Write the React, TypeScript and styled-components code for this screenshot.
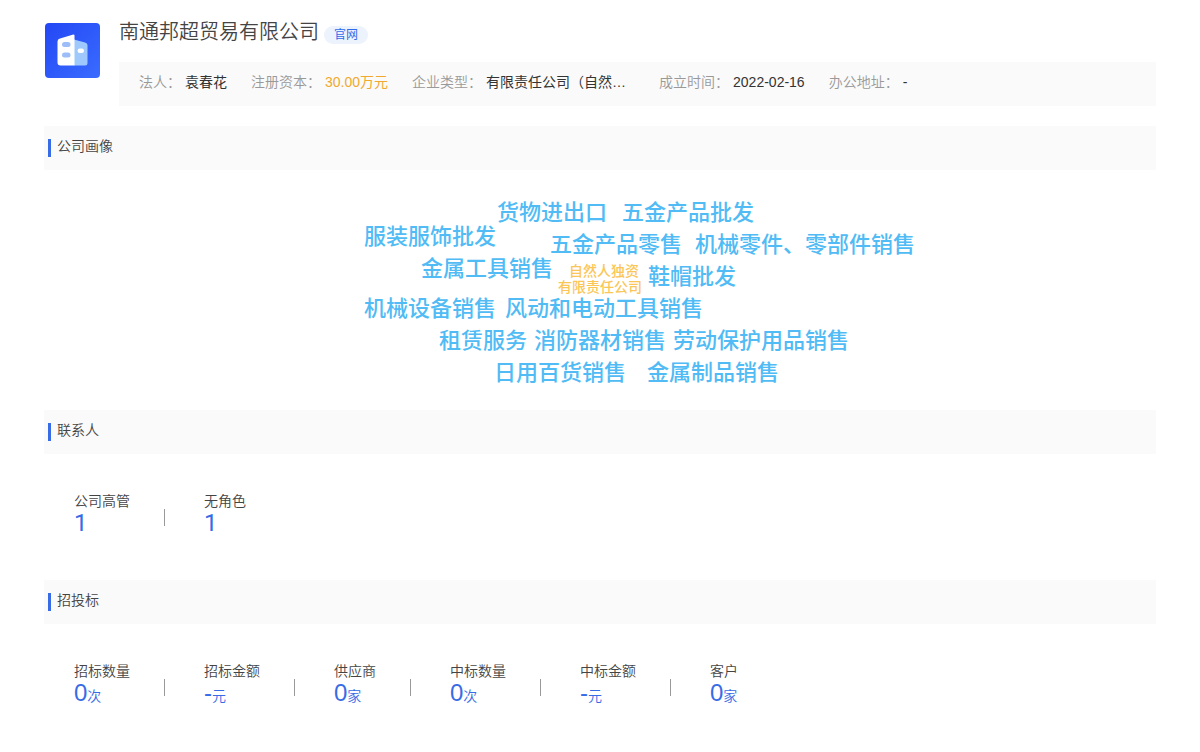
import React from "react";
import styled, { createGlobalStyle } from "styled-components";

const GlobalStyle = createGlobalStyle`
  body {
    margin: 0;
    background: #fff;
    color: #444;
    font-family: "Liberation Sans", "Noto Sans CJK SC", sans-serif;
    font-size: 14px;
    line-height: 20px;
  }
`;

const Page = styled.main`
  padding: 20px 44px;
`;

const Header = styled.header`
  display: flex;
  gap: 19px;
  margin-bottom: 20px;
`;

const Logo = styled.svg`
  flex: none;
  width: 56px;
  height: 56px;
  margin-top: 2px;
`;

const HeaderBody = styled.div`
  flex: 1;
  min-width: 0;
`;

const TitleRow = styled.div`
  display: flex;
  align-items: flex-start;
  gap: 5px;
  height: 42px;
`;

const CompanyName = styled.h1`
  margin: 0;
  font-size: 20px;
  line-height: 24px;
  font-weight: 350;
`;

const SiteLink = styled.a`
  margin-top: 6px;
  padding: 0 10px;
  border-radius: 9px;
  background: #ecf3fd;
  color: #2f6bea;
  font-size: 12px;
  line-height: 18px;
  text-decoration: none;
`;

const InfoBar = styled.dl`
  display: flex;
  gap: 24px;
  margin: 0;
  padding: 10px 20px 14px;
  background: #fafafa;
`;

const InfoItem = styled.div`
  display: flex;
  gap: 4px;
`;

const InfoLabel = styled.dt`
  color: #999;
  font-weight: 350;
  white-space: nowrap;
`;

const InfoValue = styled.dd<{ $highlight?: boolean }>`
  margin: 0;
  color: ${(p) => (p.$highlight ? "#f0a92e" : "#333")};
  white-space: nowrap;
`;

const TypeValue = styled(InfoValue)`
  width: 149px;
`;

const SectionTitle = styled.h2`
  display: flex;
  align-items: flex-start;
  gap: 6px;
  height: 44px;
  box-sizing: border-box;
  margin: 0;
  padding: 10px 4px;
  background: #fafafa;
  font-size: 14px;
  line-height: 20px;
  font-weight: 350;

  &::before {
    content: "";
    width: 3px;
    height: 18px;
    margin-top: 3px;
    background: #386be6;
  }
`;

const Cloud = styled.div`
  position: relative;
  height: 240px;
`;

const CloudWord = styled.span<{ $x: number; $y: number; $small?: boolean }>`
  position: absolute;
  left: calc(50% + ${(p) => p.$x}px);
  top: ${(p) => p.$y}px;
  color: ${(p) => (p.$small ? "#fbc658" : "#50bbf4")};
  font-size: ${(p) => (p.$small ? 14 : 22)}px;
  line-height: ${(p) => (p.$small ? 16 : 32)}px;
  font-weight: 500;
  white-space: nowrap;
`;

const Stats = styled.dl`
  display: flex;
  flex-wrap: wrap;
  margin: 0;
  padding: 37px 30px 43px;
`;

const Stat = styled.div`
  display: flex;
  align-items: center;

  &:not(:last-child)::after {
    content: "";
    width: 1px;
    height: 17px;
    margin: 6px 39px 0 34px;
    background: #999;
  }
`;

const StatBody = styled.div`
  height: 46px;
`;

const StatLabel = styled.dt`
  line-height: 20px;
  font-weight: 350;
`;

const StatValue = styled.dd<{ $count?: boolean }>`
  margin: 0;
  color: #386be6;
  font-family: ${(p) =>
    p.$count
      ? 'Roboto, "Noto Sans CJK SC", sans-serif'
      : '"Liberation Sans", "Noto Sans CJK SC", sans-serif'};
  font-size: 24px;
  line-height: 24px;
`;

const Unit = styled.span`
  font-size: 14px;
  font-weight: 350;
`;

const info = [
  { label: "法人：", value: "袁春花" },
  { label: "注册资本：", value: "30.00万元", highlight: true },
  { label: "企业类型：", value: "有限责任公司（自然…", wide: true },
  { label: "成立时间：", value: "2022-02-16" },
  { label: "办公地址：", value: "-" },
];

const words = [
  { text: "货物进出口", x: -103, y: 27 },
  { text: "五金产品批发", x: 22, y: 27 },
  { text: "服装服饰批发", x: -236, y: 51 },
  { text: "五金产品零售", x: -50, y: 59 },
  { text: "机械零件、零部件销售", x: 95, y: 59 },
  { text: "金属工具销售", x: -179, y: 83 },
  { text: "自然人独资", x: -31, y: 93, small: true },
  { text: "有限责任公司", x: -42, y: 109, small: true },
  { text: "鞋帽批发", x: 48, y: 91 },
  { text: "机械设备销售", x: -236, y: 123 },
  { text: "风动和电动工具销售", x: -95, y: 123 },
  { text: "租赁服务", x: -161, y: 155 },
  { text: "消防器材销售", x: -66, y: 155 },
  { text: "劳动保护用品销售", x: 73, y: 155 },
  { text: "日用百货销售", x: -106, y: 187 },
  { text: "金属制品销售", x: 47, y: 187 },
];

type StatData = { label: string; value: string; unit?: string };

const contacts: StatData[] = [
  { label: "公司高管", value: "1" },
  { label: "无角色", value: "1" },
];

const bids: StatData[] = [
  { label: "招标数量", value: "0", unit: "次" },
  { label: "招标金额", value: "-", unit: "元" },
  { label: "供应商", value: "0", unit: "家" },
  { label: "中标数量", value: "0", unit: "次" },
  { label: "中标金额", value: "-", unit: "元" },
  { label: "客户", value: "0", unit: "家" },
];

function StatList({ items }: { items: StatData[] }) {
  return (
    <Stats>
      {items.map((s) => (
        <Stat key={s.label}>
          <StatBody>
            <StatLabel>{s.label}</StatLabel>
            <StatValue $count={!s.unit}>
              {s.value}
              {s.unit && <Unit>{s.unit}</Unit>}
            </StatValue>
          </StatBody>
        </Stat>
      ))}
    </Stats>
  );
}

function CompanyLogo() {
  return (
    <Logo viewBox="0 0 56 56" aria-hidden="true">
      <defs>
        <linearGradient id="logoBg" x1="0" y1="0" x2="1" y2="1">
          <stop offset="0" stopColor="#2347f5" />
          <stop offset="1" stopColor="#3a6cff" />
        </linearGradient>
      </defs>
      <rect x="1" y="1" width="55" height="55" rx="4" fill="url(#logoBg)" />
      <path d="M30 17.5 41 20.4Q43.500 21 43.500 23V41Q43.500 43.500 41 43.500H30Z" fill="#9fc8fd" />
      <path d="M30.500 13.400V43.500H16.500Q13.500 43.500 13.500 40.500V19.500Q13.500 17.200 16 16.600L28.500 12.700Q30.500 12.200 30.500 13.400Z" fill="#fff" />
      <rect x="18" y="20" width="8.500" height="5" rx="2.500" fill="#9dbdf8" />
      <rect x="18" y="30.500" width="8.500" height="5" rx="2.500" fill="#9dbdf8" />
      <rect x="33.500" y="26.500" width="6.500" height="4.500" rx="2.200" fill="#fff" />
    </Logo>
  );
}

export default function App() {
  return (
    <>
      <GlobalStyle />
      <Page>
        <Header>
          <CompanyLogo />
          <HeaderBody>
            <TitleRow>
              <CompanyName>南通邦超贸易有限公司</CompanyName>
              <SiteLink href="#">官网</SiteLink>
            </TitleRow>
            <InfoBar>
              {info.map((i) => (
                <InfoItem key={i.label}>
                  <InfoLabel>{i.label}</InfoLabel>
                  {i.wide ? (
                    <TypeValue>{i.value}</TypeValue>
                  ) : (
                    <InfoValue $highlight={i.highlight}>{i.value}</InfoValue>
                  )}
                </InfoItem>
              ))}
            </InfoBar>
          </HeaderBody>
        </Header>
        <section>
          <SectionTitle>公司画像</SectionTitle>
          <Cloud>
            {words.map((w) => (
              <CloudWord key={w.text} $x={w.x} $y={w.y} $small={w.small}>
                {w.text}
              </CloudWord>
            ))}
          </Cloud>
        </section>
        <section>
          <SectionTitle>联系人</SectionTitle>
          <StatList items={contacts} />
        </section>
        <section>
          <SectionTitle>招投标</SectionTitle>
          <StatList items={bids} />
        </section>
      </Page>
    </>
  );
}
